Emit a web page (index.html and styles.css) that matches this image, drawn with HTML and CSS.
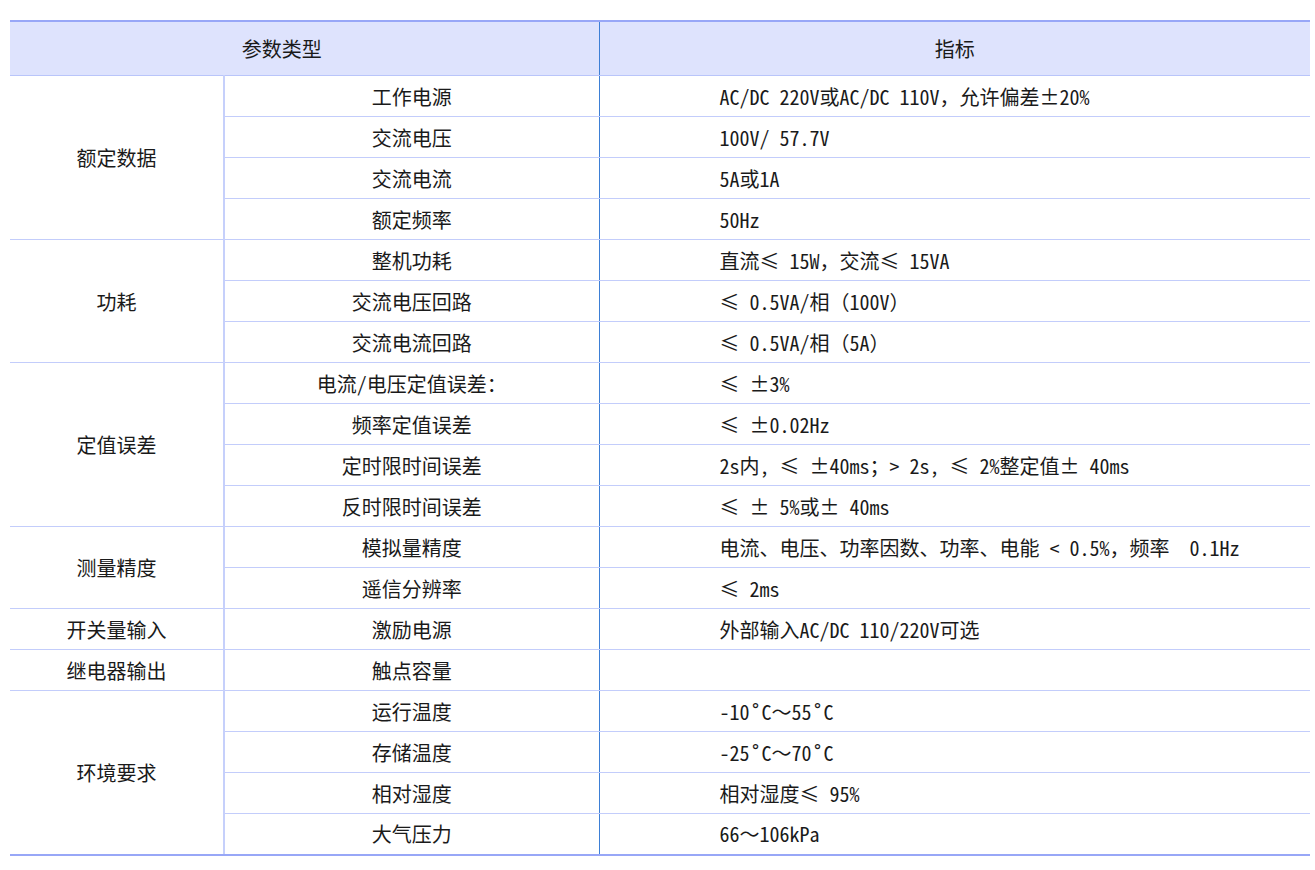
FILE: index.html
```html
<!DOCTYPE html>
<html lang="zh-CN">
<head>
<meta charset="utf-8">
<title>技术参数</title>
<link rel="stylesheet" href="styles.css">
</head>
<body>
<table class="spec">
  <colgroup>
    <col class="c1">
    <col class="c2">
    <col class="c3">
  </colgroup>
  <thead>
    <tr class="head">
      <th colspan="2" class="h-type">参数类型</th>
      <th class="h-val">指标</th>
    </tr>
  </thead>
  <tbody>
    <tr>
      <td rowspan="4" class="cat">额定数据</td>
      <td class="name">工作电源</td>
      <td class="val">AC/DC 220V或AC/DC 110V，允许偏差±20%</td>
    </tr>
    <tr><td class="name">交流电压</td><td class="val">100V/ 57.7V</td></tr>
    <tr><td class="name">交流电流</td><td class="val">5A或1A</td></tr>
    <tr><td class="name">额定频率</td><td class="val">50Hz</td></tr>
    <tr>
      <td rowspan="3" class="cat">功耗</td>
      <td class="name">整机功耗</td>
      <td class="val">直流≤ 15W，交流≤ 15VA</td>
    </tr>
    <tr><td class="name">交流电压回路</td><td class="val">≤ 0.5VA/相（100V）</td></tr>
    <tr><td class="name">交流电流回路</td><td class="val">≤ 0.5VA/相（5A）</td></tr>
    <tr>
      <td rowspan="4" class="cat">定值误差</td>
      <td class="name">电流/电压定值误差：</td>
      <td class="val">≤ ±3%</td>
    </tr>
    <tr><td class="name">频率定值误差</td><td class="val">≤ ±0.02Hz</td></tr>
    <tr><td class="name">定时限时间误差</td><td class="val">2s内, ≤ ±40ms；&gt; 2s, ≤ 2%整定值± 40ms</td></tr>
    <tr><td class="name">反时限时间误差</td><td class="val">≤ ± 5%或± 40ms</td></tr>
    <tr>
      <td rowspan="2" class="cat">测量精度</td>
      <td class="name">模拟量精度</td>
      <td class="val">电流、电压、功率因数、功率、电能 &lt; 0.5%，频率  0.1Hz</td>
    </tr>
    <tr><td class="name">遥信分辨率</td><td class="val">≤ 2ms</td></tr>
    <tr>
      <td class="cat">开关量输入</td>
      <td class="name">激励电源</td>
      <td class="val">外部输入AC/DC 110/220V可选</td>
    </tr>
    <tr>
      <td class="cat">继电器输出</td>
      <td class="name">触点容量</td>
      <td class="val"></td>
    </tr>
    <tr>
      <td rowspan="4" class="cat cat-last">环境要求</td>
      <td class="name">运行温度</td>
      <td class="val">-10˚C～55˚C</td>
    </tr>
    <tr><td class="name">存储温度</td><td class="val">-25˚C～70˚C</td></tr>
    <tr><td class="name">相对湿度</td><td class="val">相对湿度≤ 95%</td></tr>
    <tr class="last"><td class="name">大气压力</td><td class="val">66～106kPa</td></tr>
  </tbody>
</table>
</body>
</html>
```

FILE: styles.css
```css
html, body {
  margin: 0;
  padding: 0;
  background: #ffffff;
}

body {
  padding: 20px 5px 0 10px;
  font-family: "Noto Sans Mono CJK SC", "Noto Sans CJK SC", monospace;
  font-size: 20px;
  color: #1a1a1a;
}

.spec {
  width: 1300px;
  border-collapse: collapse;
  table-layout: fixed;
}

.c1 { width: 214px; }
.c2 { width: 375px; }
.c3 { width: 711px; }

.spec th,
.spec td {
  padding: 0;
  font-weight: normal;
  border-bottom: 1px solid #c3cdfb;
  white-space: pre;
}

.head th {
  height: 53px;
  background: #dee3fd;
  border-top: 2px solid #98a7f7;
  border-bottom: 1px solid #b9c5fa;
  text-align: center;
}

.head .h-type {
  padding-right: 45px;
}

.head .h-val {
  border-left: 1px solid #3d7fd6;
}

.spec tbody tr {
  height: 41px;
}

.cat {
  text-align: center;
  border-right: 2px solid #c6d0fb;
}

.name {
  text-align: center;
}

.val {
  text-align: left;
  padding-left: 120px !important;
  border-left: 1px solid #3d7fd6;
}

.spec tbody tr.last td,
.spec tbody td.cat-last {
  border-bottom: 2px solid #98a7f7;
}
```
